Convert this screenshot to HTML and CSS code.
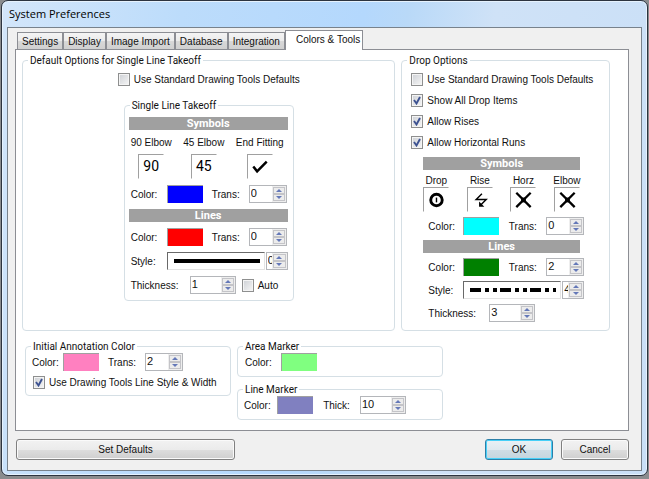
FILE: index.html
```html
<!DOCTYPE html>
<html lang="en">
<head>
<meta charset="utf-8">
<title>System Preferences</title>
<link rel="stylesheet" href="styles.css">
</head>
<body>
<main class="window">
  <h1 class="titlebar">System Preferences</h1>
  <div class="client">
    <div class="tabs" role="tablist">
      <button class="tab" role="tab">Settings</button>
      <button class="tab" role="tab">Display</button>
      <button class="tab" role="tab">Image Import</button>
      <button class="tab" role="tab">Database</button>
      <button class="tab" role="tab">Integration</button>
      <button class="tab active" role="tab" aria-selected="true">Colors &amp; Tools</button>
    </div>
    <section class="panel">
      <div class="groups">
        <fieldset class="group takeoff">
          <legend>Default Options for Single Line Takeoff</legend>
          <label class="check"><input type="checkbox">Use Standard Drawing Tools Defaults</label>
          <fieldset class="group single">
            <legend>Single Line Takeoff</legend>
            <div class="stack">
              <h2 class="bar">Symbols</h2>
              <div class="symbols">
                <div class="symbol"><span>90 Elbow</span><button class="well" aria-label="90 elbow symbol">90</button></div>
                <div class="symbol"><span>45 Elbow</span><button class="well" aria-label="45 elbow symbol">45</button></div>
                <div class="symbol"><span>End Fitting</span><button class="well" aria-label="End fitting symbol"><svg viewBox="0 0 24 24"><path d="M5 12l4 5L19 7" fill="none" stroke="#000" stroke-width="2.6"/></svg></button></div>
              </div>
              <div class="row color">
                <label for="s-color">Color:</label><button class="swatch blue" id="s-color"></button>
                <label class="mid" for="s-trans">Trans:</label>
                <div class="spin"><input id="s-trans" value="0"><div class="arrows"><button aria-label="Up"></button><button class="down" aria-label="Down"></button></div></div>
              </div>
              <h2 class="bar">Lines</h2>
              <div class="row color">
                <label for="l-color">Color:</label><button class="swatch red" id="l-color"></button>
                <label class="mid" for="l-trans">Trans:</label>
                <div class="spin"><input id="l-trans" value="0"><div class="arrows"><button aria-label="Up"></button><button class="down" aria-label="Down"></button></div></div>
              </div>
              <div class="row style">
                <label for="l-style">Style:</label>
                <div class="line"><svg viewBox="0 0 96 16"><path d="M6 8H92" stroke="#000" stroke-width="4"/></svg></div>
                <div class="spin tiny"><input id="l-style" value="0"><div class="arrows"><button aria-label="Up"></button><button class="down" aria-label="Down"></button></div></div>
              </div>
              <div class="row thick">
                <label for="l-thick">Thickness:</label>
                <div class="spin wide"><input id="l-thick" value="1"><div class="arrows"><button aria-label="Up"></button><button class="down" aria-label="Down"></button></div></div>
                <label class="check"><input type="checkbox">Auto</label>
              </div>
            </div>
          </fieldset>
        </fieldset>

        <fieldset class="group drop">
          <legend>Drop Options</legend>
          <div class="checks">
            <label class="check"><input type="checkbox">Use Standard Drawing Tools Defaults</label>
            <label class="check"><input type="checkbox" checked>Show All Drop Items</label>
            <label class="check"><input type="checkbox" checked>Allow Rises</label>
            <label class="check"><input type="checkbox" checked>Allow Horizontal Runs</label>
          </div>
          <div class="stack">
            <h2 class="bar">Symbols</h2>
            <div class="symbols">
              <div class="symbol"><span>Drop</span><button class="well" aria-label="Drop symbol"><svg viewBox="0 0 24 24"><circle cx="12.500" cy="12.500" r="6" fill="none" stroke="#000" stroke-width="3"/><path d="M12.500 10v5" stroke="#000" stroke-width="1.500"/></svg></button></div>
              <div class="symbol"><span>Rise</span><button class="well" aria-label="Rise symbol"><svg viewBox="0 0 24 24"><path d="M14 6L8 12H18.500L13 17.500" fill="none" stroke="#000" stroke-width="1.500"/><path d="M11 14V19.500H16.500z"/></svg></button></div>
              <div class="symbol"><span>Horz</span><button class="well" aria-label="Horizontal symbol"><svg viewBox="0 0 24 24"><path d="M5 5L20 20M20 5L5 20" stroke="#000" stroke-width="2.400"/><path d="M10 10h5v5h-5z"/></svg></button></div>
              <div class="symbol"><span>Elbow</span><button class="well" aria-label="Elbow symbol"><svg viewBox="0 0 24 24"><path d="M5 5L20 20M20 5L5 20" stroke="#000" stroke-width="2.400"/><path d="M10 10h5v5h-5z"/></svg></button></div>
            </div>
            <div class="row color">
              <label for="ds-color">Color:</label><button class="swatch cyan" id="ds-color"></button>
              <label class="mid" for="ds-trans">Trans:</label>
              <div class="spin"><input id="ds-trans" value="0"><div class="arrows"><button aria-label="Up"></button><button class="down" aria-label="Down"></button></div></div>
            </div>
            <h2 class="bar">Lines</h2>
            <div class="row color">
              <label for="dl-color">Color:</label><button class="swatch green" id="dl-color"></button>
              <label class="mid" for="dl-trans">Trans:</label>
              <div class="spin"><input id="dl-trans" value="2"><div class="arrows"><button aria-label="Up"></button><button class="down" aria-label="Down"></button></div></div>
            </div>
            <div class="row style">
              <label for="dl-style">Style:</label>
              <div class="line"><svg viewBox="0 0 96 16"><path d="M6 8H92" stroke="#000" stroke-width="4" stroke-dasharray="11 4 4 4 4 3"/></svg></div>
              <div class="spin tiny"><input id="dl-style" value="4"><div class="arrows"><button aria-label="Up"></button><button class="down" aria-label="Down"></button></div></div>
            </div>
            <div class="row thick">
              <label for="dl-thick">Thickness:</label>
              <div class="spin wide"><input id="dl-thick" value="3"><div class="arrows"><button aria-label="Up"></button><button class="down" aria-label="Down"></button></div></div>
            </div>
          </div>
        </fieldset>
      </div>

      <div class="markers">
        <fieldset class="group annotation">
          <legend>Initial Annotation Color</legend>
          <div class="row color">
            <label for="a-color">Color:</label><button class="swatch pink" id="a-color"></button>
            <label class="mid" for="a-trans">Trans:</label>
            <div class="spin"><input id="a-trans" value="2"><div class="arrows"><button aria-label="Up"></button><button class="down" aria-label="Down"></button></div></div>
          </div>
          <label class="check"><input type="checkbox" checked>Use Drawing Tools Line Style &amp; Width</label>
        </fieldset>
        <div class="column">
          <fieldset class="group area">
            <legend>Area Marker</legend>
            <div class="row color">
              <label for="m-color">Color:</label><button class="swatch lime" id="m-color"></button>
            </div>
          </fieldset>
          <fieldset class="group linemark">
            <legend>Line Marker</legend>
            <div class="row color">
              <label for="k-color">Color:</label><button class="swatch violet" id="k-color"></button>
              <label class="mid" for="k-thick">Thick:</label>
              <div class="spin wide"><input id="k-thick" value="10"><div class="arrows"><button aria-label="Up"></button><button class="down" aria-label="Down"></button></div></div>
            </div>
          </fieldset>
        </div>
      </div>
    </section>
    <footer class="footer">
      <button class="push defaults">Set Defaults</button>
      <button class="push ok">OK</button>
      <button class="push">Cancel</button>
    </footer>
  </div>
</main>
</body>
</html>
```
FILE: styles.css
```css
* { box-sizing: border-box; }

body {
  margin: 0;
  padding: 0 1px;
  background: #8a8c8e;
  font: 10px/13px "Liberation Sans", sans-serif;
  color: #111;
}

button, input { font: inherit; color: inherit; margin: 0; padding: 0; }

.window {
  display: flex;
  flex-direction: column;
  padding: 0 5px 4px;
  border: 1px solid #2c3440;
  border-radius: 7px;
  background: linear-gradient(100deg, #d3e6fa 0, #bcdcfb 25%, #b4d8fd 50%, #b9d9f8 56%, #cfe2f7 68%, #c9dff7 100%);
  box-shadow: inset 0 0 0 1px #e6f2fd;
}

.titlebar {
  margin: 0;
  padding: 0 2px;
  font: 11px/26px "Open Sans", sans-serif;
  color: #000;
}

.client {
  border: 1px solid #78828c;
  background: #f0f0f0;
  padding: 2px 12px 10px 7px;
}

.tabs { display: flex; align-items: flex-end; padding-left: 2px; }

.tab {
  height: 17px;
  padding: 0 4px;
  border: 1px solid #8c8e94;
  border-bottom: 0;
  background: linear-gradient(#f4f4f4, #ebebeb 50%, #d8d8d8 52%, #d0d0d0);
}

.tab.active {
  height: 20px;
  padding: 0 2px 3px 10px;
  margin-bottom: -1px;
  background: #fff;
  position: relative;
}

.panel {
  border: 1px solid #8c8e94;
  background: #fff;
  padding: 4px 18px 10px 6px;
}

.groups { display: grid; grid-template-columns: 374fr 209fr; gap: 6px; }

.group {
  --pad: 0px;
  display: flex;
  flex-direction: column;
  min-width: 0;
  margin: 0;
  padding: 0 0 0 var(--pad);
  border: 1px solid #d5dfe5;
  border-radius: 4px;
}

legend {
  margin-left: calc(5px - var(--pad));
  padding: 0 2px;
  font: 10px/13px Roboto, "Liberation Sans", sans-serif;
}

.takeoff { align-items: center; padding-top: 6px; }
.single { --pad: 4px; width: 170px; margin-top: 13px; padding: 5px 5px 6px var(--pad); }
.stack { display: flex; flex-direction: column; gap: 6px; }

.drop { --pad: 21px; padding: 6px 25px 8px var(--pad); }
.drop .checks { display: flex; flex-direction: column; gap: 8px; margin: 0 -24px 8px -12px; }
.drop .stack { gap: 5px; }
.drop .bar, .drop .symbols { margin-right: 4px; }

.check { display: flex; align-items: center; gap: 4px; white-space: nowrap; }

.check input {
  appearance: none;
  width: 12px;
  height: 13px;
  border: 1px solid #8e8f8f;
  background: linear-gradient(135deg, #cdd0d5, #f6f6f6);
  box-shadow: inset 0 0 0 1px #f4f4f4;
}

.check input:checked {
  background: url("data:image/svg+xml,%3Csvg xmlns='http://www.w3.org/2000/svg' viewBox='0 0 10 11'%3E%3Cpath d='M2 5l2.500 3.500L8 2' fill='none' stroke='%233d5291' stroke-width='1.900'/%3E%3C/svg%3E") center / 10px 11px, linear-gradient(135deg, #cdd0d5, #f6f6f6);
}

.bar {
  margin: 0;
  background: #a0a0a0;
  color: #fff;
  font: bold 11px/13px Roboto, sans-serif;
  text-align: center;
}

.symbols { display: flex; justify-content: space-between; padding: 0 4px 0 2px; }
.symbol { display: flex; flex-direction: column; align-items: center; gap: 5px; }
.drop .symbols { padding: 0; }
.drop .symbol { width: 26px; gap: 0; line-height: 12px; }

.well {
  width: 26px;
  height: 25px;
  border: 1px solid #a0a0a0;
  border-right-color: #fff;
  border-bottom-color: #fff;
  background: #fff;
  font: 14px/23px Roboto, sans-serif;
  color: #000;
}

.well svg, .line svg { display: block; width: 100%; height: 100%; }

.row { display: grid; align-items: center; height: 18px; }
.color { grid-template-columns: 38px 36px 46px 38px; }
.style { grid-template-columns: 37px 98px 22px; column-gap: 1px; }
.thick { grid-template-columns: 61px 46px auto; }
.thick .check { padding-left: 6px; }
.row > label:first-child { padding-left: 2px; }
.row .mid { text-align: center; }

.drop .color { grid-template-columns: 40px 36px 47px 38px; }
.drop .style { grid-template-columns: 39px 98px 22px; }
.drop .thick { grid-template-columns: 66px 46px; }
.drop .row > label:first-child { padding-left: 5px; }

.swatch {
  height: 18px;
  border: 1px solid #a0a0a0;
  border-right: 0;
  border-bottom: 0;
}

.blue { background: #00f; }
.red { background: #f00; }
.cyan { background: #0ff; }
.green { background: #008000; }
.pink { background: #ff80c0; }
.lime { background: #80ff80; }
.violet { background: #8080c0; }

.line {
  height: 18px;
  border: 1px solid #a0a0a0;
  border-top-color: #696969;
  border-left-color: #696969;
  border-right-color: #e3e3e3;
  border-bottom-color: #e3e3e3;
}

.spin {
  display: flex;
  height: 18px;
  border: 1px solid #b4b6ba;
  background: #fff;
}

.spin input {
  flex: 1;
  min-width: 0;
  width: 0;
  border: 0;
  padding: 0 0 2px 1px;
  background: none;
  font-size: 11px;
}

.arrows { display: flex; flex: none; flex-direction: column; width: 14px; padding: 1px; background: #eee; }
.tiny .arrows { width: 15px; }

.arrows button {
  flex: 1;
  display: flex;
  align-items: center;
  justify-content: center;
  border: 1px solid #c4c4c8;
  background: #ececec;
}

.arrows button::before {
  content: "";
  border: 3px solid transparent;
  border-top-width: 0;
  border-bottom-color: #6478b8;
}

.arrows .down::before {
  border-width: 3px 3px 0;
  border-color: #6478b8 transparent transparent;
}

.markers {
  display: grid;
  grid-template-columns: 206px 206px;
  gap: 6px;
  align-items: start;
  padding: 9px 0 0 3px;
}

.column { display: flex; flex-direction: column; gap: 6px; }
.annotation { --pad: 6px; gap: 5px; padding-bottom: 6px; }
.annotation .color { grid-template-columns: 31px 36px 46px 38px; }
.annotation .row > label:first-child { padding-left: 0; }
.annotation .check { padding-left: 1px; }
.area { --pad: 5px; padding-bottom: 5px; }
.linemark { --pad: 4px; padding-bottom: 5px; }
.linemark .color { grid-template-columns: 35px 36px 47px 46px; }

.footer { display: flex; gap: 8px; padding: 8px 0 0 1px; }

.push {
  width: 68px;
  height: 21px;
  border: 1px solid #808080;
  border-radius: 3px;
  background: linear-gradient(#f2f2f2, #ebebeb 50%, #dddddd 52%, #cfcfcf);
  box-shadow: inset 0 0 0 1px #fafafa;
}

.defaults { width: 219px; margin-right: auto; }

.ok {
  border-color: #2c7fa8;
  background: linear-gradient(#eaf1f5, #dfe9ef 50%, #cfdde5 52%, #c4d5de);
  box-shadow: inset 0 0 0 1px #48d0f8;
}
```
